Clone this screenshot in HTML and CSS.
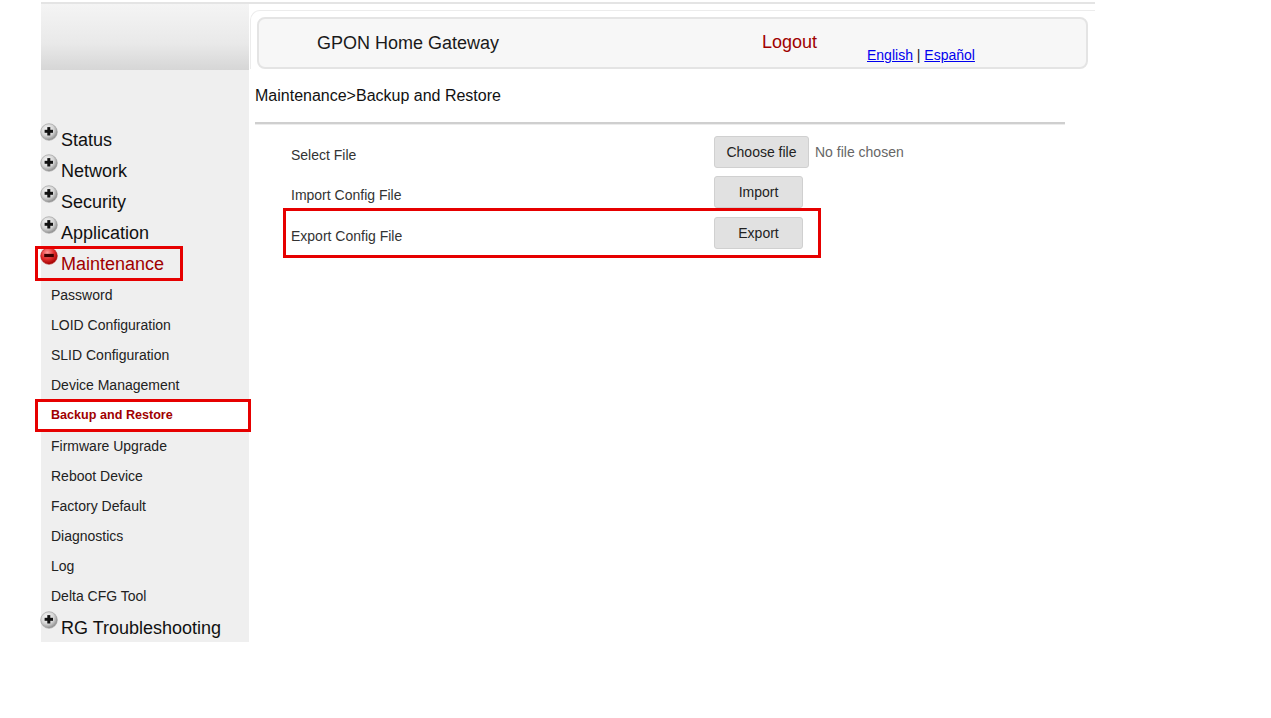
FILE: index.html
```html
<!DOCTYPE html>
<html>
    <head>
        <meta name="viewport" content="width=device-width, initial-scale=1.0">
        <link rel="stylesheet" href="styles.css">
    </head>
    <body>

        <svg class="defs" width="0" height="0">
            <defs>
                <radialGradient id="gGrey" cx="40%" cy="35%" r="65%">
                    <stop offset="0" stop-color="#fbfbfb"/>
                    <stop offset="0.6" stop-color="#d4d4d4"/>
                    <stop offset="1" stop-color="#8e8e8e"/>
                </radialGradient>
                <radialGradient id="gRed" cx="40%" cy="30%" r="70%">
                    <stop offset="0" stop-color="#ff9a9a"/>
                    <stop offset="0.55" stop-color="#e53030"/>
                    <stop offset="1" stop-color="#a00000"/>
                </radialGradient>
                <symbol id="plus" viewBox="0 0 18 18">
                    <circle cx="9" cy="9" r="8.3" fill="url(#gGrey)" stroke="#9a9a9a" stroke-width="0.6"/>
                    <rect x="4.6" y="6.8" width="8.4" height="3" fill="#111"/>
                    <rect x="7.3" y="4.1" width="3" height="8.4" fill="#111"/>
                </symbol>
                <symbol id="minus" viewBox="0 0 18 18">
                    <circle cx="9" cy="9" r="8.3" fill="url(#gRed)" stroke="#b01010" stroke-width="0.6"/>
                    <rect x="4.2" y="6.9" width="9.6" height="3.2" fill="#3a0000"/>
                </symbol>
            </defs>
        </svg>

        <div class="page">

            <div class="side">
                <div class="side-head"></div>
                <ul class="menu">
                    <li class="item"><svg class="ico"><use href="#plus"/></svg>Status</li>
                    <li class="item"><svg class="ico"><use href="#plus"/></svg>Network</li>
                    <li class="item"><svg class="ico"><use href="#plus"/></svg>Security</li>
                    <li class="item"><svg class="ico"><use href="#plus"/></svg>Application</li>
                    <li class="item item-on"><svg class="ico"><use href="#minus"/></svg>Maintenance</li>
                    <li class="sub">Password</li>
                    <li class="sub">LOID Configuration</li>
                    <li class="sub">SLID Configuration</li>
                    <li class="sub">Device Management</li>
                    <li class="sub sub-on">Backup and Restore</li>
                    <li class="sub">Firmware Upgrade</li>
                    <li class="sub">Reboot Device</li>
                    <li class="sub">Factory Default</li>
                    <li class="sub">Diagnostics</li>
                    <li class="sub">Log</li>
                    <li class="sub">Delta CFG Tool</li>
                    <li class="item"><svg class="ico"><use href="#plus"/></svg>RG Troubleshooting</li>
                </ul>
            </div>

            <div class="main">
                <div class="frame">
                    <div class="head">
                        <span class="title">GPON Home Gateway</span>
                        <a class="logout">Logout</a>
                        <span class="lang"><a href="#">English</a> | <a href="#">Español</a></span>
                    </div>
                </div>

                <div class="crumb">Maintenance&gt;Backup and Restore</div>
                <div class="rule"></div>

                <div class="form">
                    <div class="row">
                        <span class="label">Select File</span>
                        <label class="btn btn-file">Choose file</label>
                        <span class="nofile">No file chosen</span>
                    </div>
                    <div class="row">
                        <span class="label">Import Config File</span>
                        <button class="btn">Import</button>
                    </div>
                    <div class="row row-on">
                        <span class="label">Export Config File</span>
                        <button class="btn">Export</button>
                    </div>
                </div>
            </div>

        </div>

    </body>
</html>
```

FILE: styles.css
```css
body {
    margin: 0;
    padding-top: 2px;
    font-family: "Liberation Sans", Arial, sans-serif;
    background: #ffffff;
}

.defs {
    position: absolute;
}

.page {
    display: flex;
    align-items: flex-start;
    width: 1054px;
    margin-left: 41px;
    border-top: 2px solid #e4e4e4;
}

/* left menu */

.side {
    width: 208px;
    flex: none;
    background: #efefef;
}

.side-head {
    height: 66px;
    background: linear-gradient(#f4f4f4, #e9e9e9 60%, #d6d6d6);
}

.menu {
    list-style: none;
    margin: 0;
    padding: 53px 0 0 0;
}

.item {
    font-size: 18px;
    line-height: 31px;
    height: 31px;
    color: #111;
    white-space: nowrap;
}

.ico {
    width: 18px;
    height: 18px;
    margin-left: -1px;
    margin-right: 3px;
    vertical-align: 5px;
}

.item-on {
    height: 33px;
    width: 141px;
    margin-left: -5px;
    padding-left: 5px;
    color: #a00000;
    outline: 3px solid #e60000;
    outline-offset: -2px;
}

.sub {
    font-size: 14px;
    line-height: 30px;
    height: 30px;
    padding-left: 10px;
    color: #222;
}

.sub-on {
    height: 31px;
    line-height: 31px;
    width: 199px;
    margin-left: -5px;
    padding-left: 15px;
    font-size: 12.6px;
    font-weight: bold;
    color: #a00000;
    background: #ffffff;
    outline: 3px solid #e60000;
    outline-offset: -2px;
}

/* right side */

.main {
    flex: 1;
}

.frame {
    margin: 6px 0 0 1px;
    padding: 6px 0 0 6px;
    border-top: 1px solid #ececec;
    border-left: 1px solid #ececec;
    border-top-left-radius: 10px;
}

.head {
    display: flex;
    height: 48px;
    width: 827px;
    background: #f7f7f7;
    border: 2px solid #e4e4e4;
    border-radius: 8px;
    font-size: 18px;
}

.title {
    width: 445px;
    padding-left: 58px;
    line-height: 48px;
    color: #1a1a1a;
}

.logout {
    width: 105px;
    line-height: 46px;
    color: #a00000;
}

.lang {
    font-size: 14px;
    padding-top: 28px;
    color: #222;
}

.lang a {
    color: #0000ee;
}

.crumb {
    margin: 17px 0 0 6px;
    font-size: 16px;
    line-height: 20px;
    color: #111;
}

.rule {
    width: 810px;
    margin: 16px 0 0 6px;
    border-top: 2px solid #cfcfcf;
    border-bottom: 1px solid #ececec;
}

.form {
    margin: 7px 0 0 38px;
    width: 530px;
}

.row {
    display: flex;
    align-items: center;
    height: 40px;
    padding-left: 4px;
    font-size: 14px;
}

.row-on {
    height: 42px;
    outline: 3px solid #e60000;
    outline-offset: 1px;
}

.label {
    flex: none;
    width: 423px;
    padding-top: 6px;
    color: #333;
}

.btn {
    flex: none;
    box-sizing: border-box;
    width: 89px;
    height: 32px;
    border: 1px solid #d0d0d0;
    border-radius: 3px;
    background: #e1e1e1;
    font-family: "Liberation Sans", Arial, sans-serif;
    font-size: 14px;
    line-height: 30px;
    text-align: center;
    color: #222;
    padding: 0;
}

.btn-file {
    width: 95px;
}

.nofile {
    margin-left: 6px;
    color: #666;
    white-space: nowrap;
}
```
